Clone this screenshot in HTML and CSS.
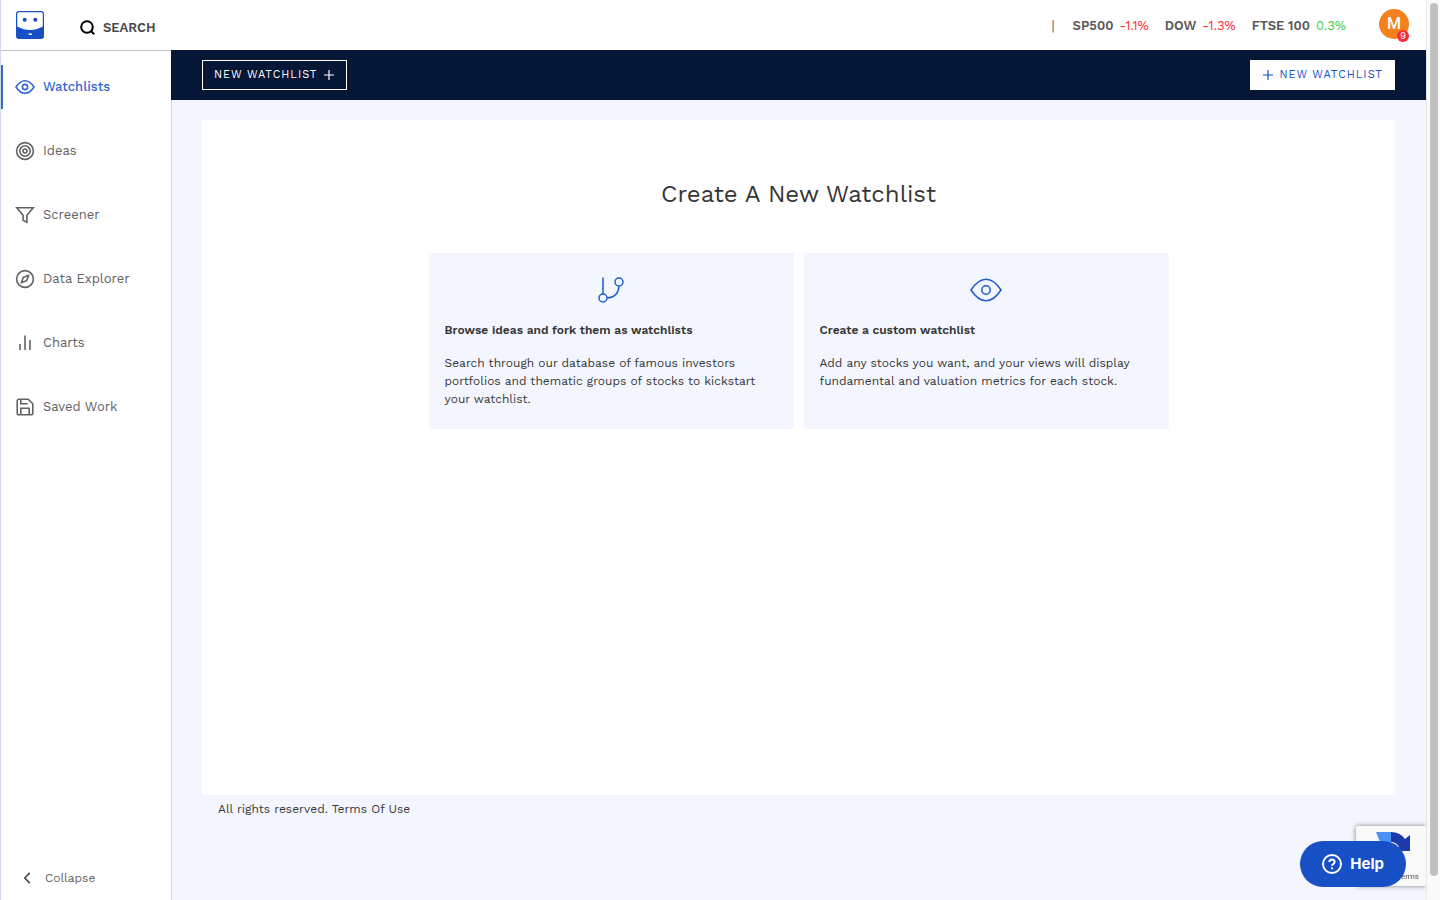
FILE: index.html
```html
<!DOCTYPE html>
<html lang="en">
<head>
<meta charset="utf-8">
<meta name="viewport" content="width=device-width, initial-scale=1">
<title>Watchlists</title>
<link rel="stylesheet" href="styles.css">
</head>
<body>
<div class="app">
  <header class="header">
    <a class="logo" href="#" aria-label="Home">
      <svg width="28" height="28" viewBox="0 0 28 28">
        <rect width="28" height="28" rx="3" fill="#1650c4"/>
        <path d="M3 1.2h22q1.8 0 1.8 1.8v12.5Q20 19 14 19T1.2 15.5V3Q1.2 1.2 3 1.2Z" fill="#fff"/>
        <circle cx="8.7" cy="8.7" r="2" fill="#1650c4"/>
        <circle cx="19.3" cy="8.7" r="2" fill="#1650c4"/>
        <path d="M11.5 22.2q2.3.7 4.5 0l-.3 1.8q-2.1.3-3-.8z" fill="#fff"/>
      </svg>
    </a>
    <label class="search">
      <svg width="16" height="16" viewBox="0 0 16 16" fill="none" stroke="#000" stroke-width="2">
        <circle cx="7" cy="7" r="5.8"/><path d="m11.2 11.2 3 3"/>
      </svg>
      <input class="search-input" type="search" placeholder="SEARCH" aria-label="Search">
    </label>
    <ul class="tickers">
      <li class="divider">|</li>
      <li class="ticker"><b>SP500</b><span class="down">-1.1%</span></li>
      <li class="ticker"><b>DOW</b><span class="down">-1.3%</span></li>
      <li class="ticker"><b>FTSE 100</b><span class="up">0.3%</span></li>
    </ul>
    <button class="avatar" type="button">M<span class="badge">9</span></button>
  </header>

  <div class="body">
    <nav class="sidebar">
      <a class="nav-item active" href="#">
        <svg class="icon" viewBox="0 0 20 20"><path d="M1 10q4-6.3 9-6.3T19 10q-4 6.3-9 6.3T1 10Z"/><circle cx="10" cy="10" r="2.6"/></svg>
        Watchlists</a>
      <a class="nav-item" href="#">
        <svg class="icon" viewBox="0 0 20 20"><circle cx="10" cy="10" r="8.4"/><circle cx="10" cy="10" r="5.2"/><circle cx="10" cy="10" r="2"/></svg>
        Ideas</a>
      <a class="nav-item" href="#">
        <svg class="icon" viewBox="0 0 20 20"><path d="M1.8 2.8h16.4l-6.3 7.5v6.9l-3.8-1.9v-5Z"/></svg>
        Screener</a>
      <a class="nav-item" href="#">
        <svg class="icon" viewBox="0 0 20 20"><circle cx="10" cy="10" r="8.4"/><path d="m13.5 6.5-1.8 5.2-5.2 1.8 1.8-5.2Z"/></svg>
        Data Explorer</a>
      <a class="nav-item" href="#">
        <svg class="icon" viewBox="0 0 20 20"><path d="M5 17v-6M10 17V2.5M15 17V7"/></svg>
        Charts</a>
      <a class="nav-item" href="#">
        <svg class="icon" viewBox="0 0 20 20"><path d="M4 2.2h9.2l4.6 4.6V16q0 1.8-1.8 1.8H4q-1.8 0-1.8-1.8V4Q2.2 2.2 4 2.2Z"/><path d="M5.8 2.5v4.3h6.8M5.8 17.5v-6.2h8.4v6.2"/></svg>
        Saved Work</a>
      <button class="collapse" type="button">
        <svg width="8" height="12" viewBox="0 0 8 12" fill="none" stroke="#4a4a4a" stroke-width="1.7"><path d="M6.8.8 1.8 6l5 5.2"/></svg>
        Collapse</button>
    </nav>

    <div class="content">
      <div class="toolbar">
        <button class="btn btn-outline" type="button">NEW WATCHLIST
          <svg class="plus" viewBox="0 0 12 12"><path d="M6 1v10M1 6h10"/></svg></button>
        <button class="btn btn-solid" type="button">
          <svg class="plus" viewBox="0 0 12 12"><path d="M6 1v10M1 6h10"/></svg>NEW WATCHLIST</button>
      </div>
      <div class="page">
        <main class="panel">
          <h1 class="title">Create A New Watchlist</h1>
          <div class="cards">
            <a class="card" href="#">
              <svg class="card-icon" viewBox="0 0 32 32"><path d="M8 3.5V20M24 12.2Q23 23.5 12.2 24"/><circle cx="8" cy="24" r="4"/><circle cx="24" cy="8" r="4"/></svg>
              <h2 class="card-title">Browse ideas and fork them as watchlists</h2>
              <p class="card-text">Search through our database of famous investors portfolios and thematic groups of stocks to kickstart your watchlist.</p>
            </a>
            <a class="card" href="#">
              <svg class="card-icon" viewBox="0 0 32 32"><path d="M1 16Q8 5.2 16 5.2T31 16Q24 26.8 16 26.8T1 16Z"/><circle cx="16" cy="16" r="4.2"/></svg>
              <h2 class="card-title">Create a custom watchlist</h2>
              <p class="card-text">Add any stocks you want, and your views will display fundamental and valuation metrics for each stock.</p>
            </a>
          </div>
        </main>
        <footer class="footer">All rights reserved. <a href="#">Terms Of Use</a></footer>
      </div>
    </div>
  </div>
</div>

<div class="scrollbar" aria-hidden="true"><div class="thumb"></div></div>

<aside class="captcha">
  <svg width="34" height="20" viewBox="0 0 34 20"><path d="M0 0h15v20H0l4-10Z" fill="#4a90f5"/><path d="M15 0q9 0 14 7l5-4v16H18l5-4q-3-5-8-5Z" fill="#1c3aa9"/><path d="M9 20q0-9 8-9 4 0 6 4l-4 5Z" fill="#c9ccd2"/></svg>
  <a class="captcha-link" href="#">Terms</a>
</aside>
<button class="help" type="button">
  <svg width="20" height="20" viewBox="0 0 20 20" fill="none" stroke="#fff" stroke-width="2"><circle cx="10" cy="10" r="9"/><path d="M7.4 8q0-2.5 2.6-2.5T12.6 8q0 1.2-1.3 2T10 11.8"/><path d="M10 13.3v2"/></svg>
  Help</button>
</body>
</html>
```
FILE: styles.css
```css
* { box-sizing: border-box; }

body {
  margin: 0;
  min-height: 100vh;
  display: flex;
  font: 12px/18px "Work Sans", Inter, sans-serif;
  color: #363636;
  background: #fff;
}

a { color: inherit; text-decoration: none; }
button { font: inherit; color: inherit; border: 0; background: none; padding: 0; cursor: pointer; }
h1, h2, p, ul { margin: 0; padding: 0; }
svg { flex: none; display: block; }

.app {
  flex: 1;
  min-width: 0;
  display: flex;
  flex-direction: column;
  border-left: 1px solid #d3d8e8;
}

.header {
  height: 50px;
  display: flex;
  align-items: center;
  padding: 0 17px 0 15px;
}

.search { display: flex; align-items: center; gap: 7px; margin-left: 36px; padding-top: 5px; }
.search-input {
  width: 200px;
  padding: 0;
  border: 0;
  outline: 0;
  background: none;
  font: 600 13px/18px "Work Sans", Inter, sans-serif;
}
.search-input::placeholder { color: #4a4a4a; opacity: 1; }

.tickers {
  display: flex;
  gap: 16px;
  margin-left: auto;
  margin-right: 33px;
  padding-top: 2px;
  list-style: none;
  font-size: 13px;
  color: #5a5a5a;
}
.divider { padding-right: 2px; }
.ticker { display: flex; gap: 6px; }
.ticker b { font-weight: 600; }
.down { color: #fb2d35; }
.up { color: #3ed14a; }

.avatar {
  position: relative;
  width: 30px;
  height: 30px;
  margin-bottom: 2px;
  border-radius: 50%;
  background: #f5801e;
  color: #fff;
  font: 500 16px/30px Roboto, sans-serif;
}
.badge {
  position: absolute;
  right: 0;
  bottom: -3px;
  width: 12px;
  height: 12px;
  border-radius: 50%;
  background: #fb2d35;
  font: 9px/12px Inter, sans-serif;
}

.body { flex: 1; display: flex; }

.sidebar {
  width: 170px;
  flex: none;
  display: flex;
  flex-direction: column;
  gap: 20px;
  padding: 14px 0 13px;
  border-top: 1px solid #c4c4c4;
}
.nav-item {
  height: 44px;
  display: flex;
  align-items: center;
  gap: 8px;
  padding-left: 12px;
  border-left: 2px solid transparent;
  font-size: 13px;
  color: #636363;
}
.nav-item.active { border-color: #3468cf; color: #3468cf; font-weight: 500; }
.icon { width: 20px; height: 20px; fill: none; stroke: currentColor; stroke-width: 1.6; }
.collapse { display: flex; align-items: center; gap: 14px; margin-top: auto; padding-left: 22px; color: #636363; }

.content { flex: 1; min-width: 0; display: flex; flex-direction: column; }
.toolbar { display: flex; justify-content: space-between; padding: 10px 31px; background: #051636; }
.btn {
  height: 30px;
  display: flex;
  align-items: center;
  gap: 5px;
  padding: 0 12px;
  font-size: 11px;
  letter-spacing: 1px;
}
.btn-outline { padding: 0 11px; border: 1px solid #fff; color: #fff; }
.btn-solid { background: #fff; color: #1650c4; }
.plus { width: 12px; height: 12px; fill: none; stroke: currentColor; stroke-width: 1.2; }

.page { flex: 1; padding: 20px 31px 0 30px; border-left: 1px solid #d3d8e8; background: #f3f6ff; }
.panel { min-height: 75vh; padding: 56px 20px; background: #fff; }
.title { font-size: 24px; line-height: 36px; font-weight: 400; text-align: center; }
.cards {
  display: grid;
  grid-template-columns: 1fr 1fr;
  gap: 10px;
  max-width: 740px;
  margin: 41px auto 0;
}
.card { padding: 21px 16px; background: #f3f6ff; }
.card-icon { width: 32px; height: 32px; margin: 0 auto 15px; fill: none; stroke: #1f5bd0; stroke-width: 1.5; }
.card-title { font-size: 12px; line-height: 18px; font-weight: 600; margin-bottom: 15px; }
.footer { padding: 5px 16px; }

.scrollbar { width: 14px; flex: none; padding: 3px 2px 0 3px; border-left: 1px solid #e8e8e8; background: #fafafa; }
.thumb { height: 97vh; width: 8px; border-radius: 4px; background: #c1c1c1; }

.captcha {
  position: fixed;
  right: 14px;
  bottom: 14px;
  width: 70px;
  height: 60px;
  padding: 6px 7px 0 20px;
  border-radius: 2px 0 0 2px;
  background: #f9f9f9;
  box-shadow: 0 0 5px #808080;
  clip-path: inset(-6px 0 -6px -6px);
}
.captcha-link { display: block; margin-top: 16px; font: 8px/18px Roboto, sans-serif; text-align: right; color: #555; }

.help {
  position: fixed;
  right: 34px;
  bottom: 13px;
  height: 46px;
  display: flex;
  align-items: center;
  gap: 8px;
  padding: 0 22px;
  border-radius: 23px;
  background: #1650c4;
  color: #fff;
  font: 700 15px/20px Inter, sans-serif;
}
```
